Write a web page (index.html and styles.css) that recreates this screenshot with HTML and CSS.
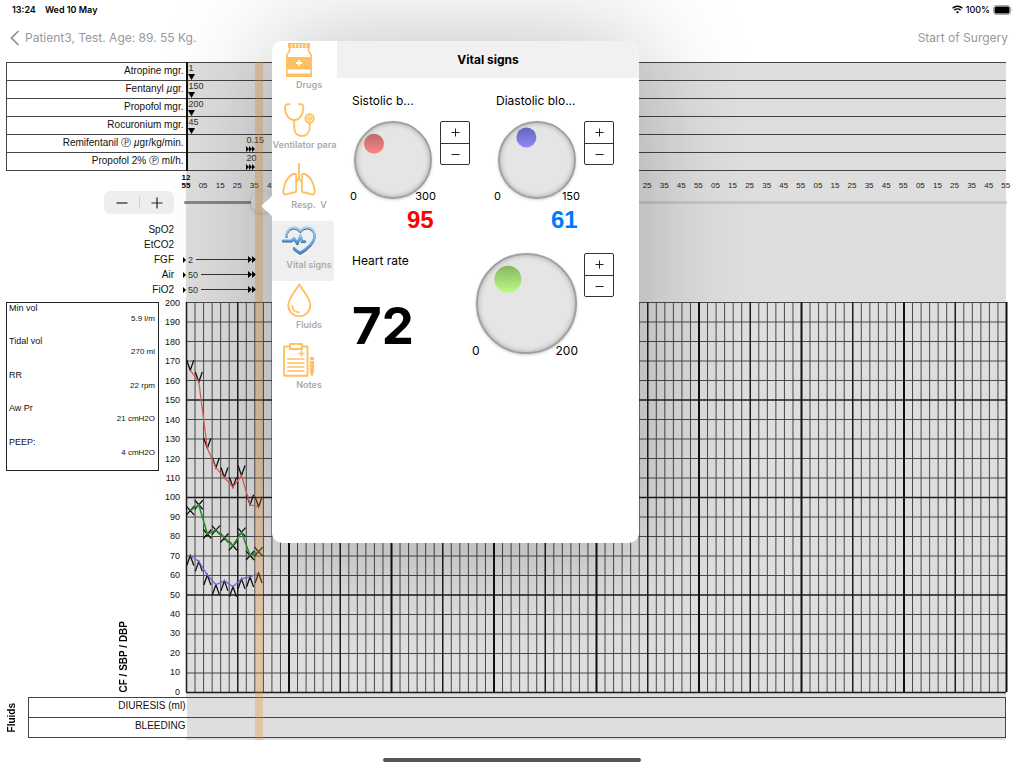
FILE: index.html
```html
<!DOCTYPE html>
<html lang="en">
<head>
<meta charset="utf-8">
<meta name="viewport" content="width=device-width, initial-scale=1">
<title>Anaesthesia record</title>
<link rel="stylesheet" href="styles.css">
</head>
<body>
<header class="status">
  <span>13:24</span>
  <span>Wed 10 May</span>
  <span class="status-right">
    <svg width="11" height="9" viewBox="0 0 11 9" fill="none" stroke="#000" stroke-width="1.5" aria-hidden="true"><path d="M.6 3.2a7 7 0 0 1 9.8 0M2.4 5.2a4.4 4.4 0 0 1 6.2 0"/><path d="M5.5 8.6L3.9 7a2.3 2.3 0 0 1 3.2 0z" fill="#000" stroke="none"/></svg>
    <span>100%</span>
    <svg width="20" height="10" viewBox="0 0 20 10" aria-hidden="true"><rect x=".5" y=".5" width="17" height="9" rx="2.5" fill="#fff" stroke="#aaa"/><rect x="1.5" y="1.5" width="15" height="7" rx="1.5"/><path d="M18.5 3.5q1.2 1.5 0 3z" fill="#aaa"/></svg>
  </span>
</header>
<nav class="navbar">
  <a href="#patients" class="nav-link"><svg width="10" height="16" viewBox="0 0 10 16" fill="none" stroke="#8e8e93" stroke-width="1.7" aria-hidden="true"><path d="M8.5 1L1.5 8l7 7"/></svg>Patient3, Test. Age: 89. 55 Kg.</a>
  <a href="#start" class="nav-link">Start of Surgery</a>
</nav>

<main class="sheet">
  <table class="drugs">
    <tbody>
      <tr><th scope="row">Atropine mgr.</th><td><span class="dose">1</span><svg class="bolus" viewBox="0 0 7 6"><path d="M0 0h7L3.5 6z"/></svg></td></tr>
      <tr><th scope="row">Fentanyl <i>µ</i>gr.</th><td><span class="dose">150</span><svg class="bolus" viewBox="0 0 7 6"><path d="M0 0h7L3.5 6z"/></svg></td></tr>
      <tr><th scope="row">Propofol mgr.</th><td><span class="dose">200</span><svg class="bolus" viewBox="0 0 7 6"><path d="M0 0h7L3.5 6z"/></svg></td></tr>
      <tr><th scope="row">Rocuronium mgr.</th><td><span class="dose">45</span><svg class="bolus" viewBox="0 0 7 6"><path d="M0 0h7L3.5 6z"/></svg></td></tr>
      <tr><th scope="row">Remifentanil Ⓟ <i>µ</i>gr/kg/min.</th><td class="infusion"><span class="dose">0.15</span><svg class="rate" viewBox="0 0 9 6"><path d="M0 0l3 3-3 3zM3 0l3 3-3 3zM6 0l3 3-3 3z"/></svg></td></tr>
      <tr><th scope="row">Propofol 2% Ⓟ ml/h.</th><td class="infusion"><span class="dose">20</span><svg class="rate" viewBox="0 0 9 6"><path d="M0 0l3 3-3 3zM3 0l3 3-3 3zM6 0l3 3-3 3z"/></svg></td></tr>
    </tbody>
  </table>

  <ol class="times" id="times"></ol>

  <div class="scrub">
    <div class="zoom"><button type="button" aria-label="Zoom out"><svg width="12" height="12" viewBox="0 0 12 12"><path d="M.5 6h11" stroke="#222" stroke-width="1.2"/></svg></button><button type="button" aria-label="Zoom in"><svg width="12" height="12" viewBox="0 0 12 12"><path d="M.5 6h11M6 .5v11" stroke="#222" stroke-width="1.2"/></svg></button></div>
    <input type="range" class="timeline" min="0" max="1000" value="84" aria-label="Time">
  </div>

  <dl class="gases">
    <div><dt>SpO2</dt></div>
    <div><dt>EtCO2</dt></div>
    <div><dt>FGF</dt><dd><svg width="3" height="6"><path d="M0 0l3 3-3 3z"/></svg><span>2</span><i></i><svg width="8" height="7"><path d="M0 0l4 3.5-4 3.5zM4 0l4 3.5-4 3.5z"/></svg></dd></div>
    <div><dt>Air</dt><dd><svg width="3" height="6"><path d="M0 0l3 3-3 3z"/></svg><span>50</span><i></i><svg width="8" height="7"><path d="M0 0l4 3.5-4 3.5zM4 0l4 3.5-4 3.5z"/></svg></dd></div>
    <div><dt>FiO2</dt><dd><svg width="3" height="6"><path d="M0 0l3 3-3 3z"/></svg><span>50</span><i></i><svg width="8" height="7"><path d="M0 0l4 3.5-4 3.5zM4 0l4 3.5-4 3.5z"/></svg></dd></div>
  </dl>

  <section class="chart">
    <div class="chart-side">
      <dl class="vent">
        <div><dt>Min vol</dt><dd>5.9 l/m</dd></div>
        <div><dt>Tidal vol</dt><dd>270 ml</dd></div>
        <div><dt>RR</dt><dd>22 rpm</dd></div>
        <div><dt>Aw Pr</dt><dd>21 cmH2O</dd></div>
        <div><dt>PEEP:</dt><dd>4 cmH2O</dd></div>
      </dl>
      <h2 class="upright axis-title">CF / SBP / DBP</h2>
    </div>
    <ol class="scale-y" id="scaleY"></ol>
    <svg class="plot" id="plot" viewBox="0 0 820 390" preserveAspectRatio="none" role="img" aria-label="Heart rate and blood pressure"></svg>
  </section>

  <section class="fluids">
    <h2 class="upright">Fluids</h2>
    <table>
      <tbody>
        <tr><th scope="row">DIURESIS (ml)</th><td></td></tr>
        <tr><th scope="row">BLEEDING</th><td></td></tr>
      </tbody>
    </table>
  </section>
  <div class="now"></div>
</main>
<footer class="home"></footer>

<aside class="popover" role="dialog" aria-label="Vital signs">
  <svg class="arrow" width="12" height="30" viewBox="0 0 12 30" aria-hidden="true"><path d="M12 0c0 4-1 5-4 8L1.500 13.500q-1.500 1.500 0 3L8 22c3 3 4 4 4 8z" fill="#fff"/></svg>
  <div class="panel">
    <div class="tabs">
      <button type="button" class="tab">
        <svg viewBox="0 0 34 34"><path d="M6 0h22v5H6z"/><path d="M10 1v3.500M13.500 1v3.500M17 1v3.500M20.500 1v3.500M24 1v3.500" stroke="#fff" stroke-width="1"/><path d="M7.500 5v3L4.800 12v21h24.400V12l-2.700-4V5" fill="#fff" stroke="#ffc062" stroke-width="1.600"/><path d="M4 14h26v12.500H4zM4 30.500h26V34H4z"/><path d="M17 17v6M14 20h6" stroke="#fff" stroke-width="1.800"/></svg>
        <span>Drugs</span></button>
      <button type="button" class="tab wide">
        <svg viewBox="0 0 34 34" class="line"><path d="M7.500 1.200C4 .7 3 2 3 4.500c0 7 4 12.500 9.200 12.500S21.400 11.500 21.400 4.500c0-2.500-1-3.800-4.500-3.300"/><path d="M12.200 17v7c0 6 3 9 7.500 9s8-3 8-9v-4"/><circle cx="27.600" cy="15.500" r="4.200"/><circle cx="27.600" cy="15.500" r="2.200" fill="#ffd798" stroke-width=".8"/></svg>
        <span>Ventilator para</span></button>
      <button type="button" class="tab">
        <svg viewBox="0 0 34 34" class="line"><path d="M17 1v14M14.200 19V13c0-2-1-2.700-2.700-2C6 13 1.500 20.500 1.200 28.500c0 2 1 3.200 3 2.900 2.500-.4 4.500-1.700 8-1.900 1.500-.1 2-1 2-2.300V19l2.800-3.500L19.800 19v8.200c0 1.300.5 2.200 2 2.300 3.500.2 5.500 1.500 8 1.900 2 .3 3-.9 3-2.900-.3-8-4.800-15.500-10.300-17.500-1.700-.7-2.700 0-2.700 2V19"/></svg>
        <span>Resp. &nbsp;V</span></button>
      <button type="button" class="tab selected" aria-pressed="true">
        <svg viewBox="0 0 34 34" class="line"><defs><linearGradient id="blue" x1="0" y1="0" x2="0" y2="1"><stop offset="0" stop-color="#a5d3f5"/><stop offset="1" stop-color="#3a92e4"/></linearGradient></defs><g class="heart"><path d="M4.500 13C4.500 7.500 8 4.300 12 4.300c2.500 0 4.500 1.200 6.300 3.500 1.800-2.300 3.800-3.500 6.500-3.500 5.300 0 8.500 4.400 7.700 9.700-1 6-7.500 11.500-14.200 15.700-2.300-1.200-4.500-2.700-6.300-4.700"/><path d="M1 17.500h8.500l2.500-2.500 3.500 5 3-8.500 1.500 6.500h3"/></g></svg>
        <span>Vital signs</span></button>
      <button type="button" class="tab">
        <svg viewBox="0 0 34 34" class="line"><path d="M17.300 1.500C13.500 8 6.300 15 6.300 22.300a11 11 0 0 0 22 0C28.300 15 21 8 17.300 1.500z"/><path d="M10.200 22.500c.2 4 2.800 6.600 6.600 6.900" stroke-width="1.600"/></svg>
        <span>Fluids</span></button>
      <button type="button" class="tab">
        <svg viewBox="0 0 34 34" class="line"><path d="M8 3.500H2v29.300h23.500V3.500H20"/><path d="M8 1h4.500q1.500-1 3 0H20v5H8z"/><path d="M5.500 16H22M5.500 20H22M5.500 24H22M5.500 28H22" stroke-width="1.300"/><path d="M19.500 8v5M17 10.500h5" stroke-width="1.600"/><path d="M28.500 14.500h3V30L30 33l-1.500-3z" fill="#ffc062" stroke-width="1"/><path d="M28 17.500h4" stroke="#fff" stroke-width=".8"/></svg>
        <span>Notes</span></button>
    </div>
    <div class="detail">
      <h1>Vital signs</h1>
      <div class="vitals">
        <section class="vital">
          <h3>Sistolic b...</h3>
          <div class="controls">
            <div class="dial">
              <label class="knob"><span class="dot red" style="--angle:-49.5deg"></span><input type="range" min="0" max="300" value="95" aria-label="Sistolic blood pressure"></label>
              <div class="ends"><span>0</span><span>300</span></div>
            </div>
            <div class="stepper"><button type="button" aria-label="Increase"><svg width="9" height="9" viewBox="0 0 9 9"><path d="M.5 4.500h8M4.500.5v8" stroke="#222"/></svg></button><button type="button" aria-label="Decrease"><svg width="9" height="9" viewBox="0 0 9 9"><path d="M.5 4.500h8" stroke="#222"/></svg></button></div>
          </div>
          <output class="sbp">95</output>
        </section>
        <section class="vital">
          <h3>Diastolic blo...</h3>
          <div class="controls">
            <div class="dial">
              <label class="knob"><span class="dot blue" style="--angle:-25.2deg"></span><input type="range" min="0" max="150" value="61" aria-label="Diastolic blood pressure"></label>
              <div class="ends"><span>0</span><span>150</span></div>
            </div>
            <div class="stepper"><button type="button" aria-label="Increase"><svg width="9" height="9" viewBox="0 0 9 9"><path d="M.5 4.500h8M4.500.5v8" stroke="#222"/></svg></button><button type="button" aria-label="Decrease"><svg width="9" height="9" viewBox="0 0 9 9"><path d="M.5 4.500h8" stroke="#222"/></svg></button></div>
          </div>
          <output class="dbp">61</output>
        </section>
        <section class="heart-rate">
          <div class="reading">
            <h3>Heart rate</h3>
            <output>72</output>
          </div>
          <div class="controls">
            <div class="dial large">
              <label class="knob"><span class="dot green" style="--angle:-37.8deg"></span><input type="range" min="0" max="200" value="72" aria-label="Heart rate"></label>
              <div class="ends"><span>0</span><span>200</span></div>
            </div>
            <div class="stepper"><button type="button" aria-label="Increase"><svg width="9" height="9" viewBox="0 0 9 9"><path d="M.5 4.500h8M4.500.5v8" stroke="#222"/></svg></button><button type="button" aria-label="Decrease"><svg width="9" height="9" viewBox="0 0 9 9"><path d="M.5 4.500h8" stroke="#222"/></svg></button></div>
          </div>
        </section>
      </div>
    </div>
  </div>
</aside>
<script src="chart.js"></script>
</body>
</html>
```

FILE: styles.css
```css
* { box-sizing: border-box; margin: 0; padding: 0; }
body { display: flex; flex-direction: column; min-height: 100vh; position: relative; background: #fff; color: #111; font-family: "Liberation Sans", Arial, sans-serif; font-size: 10px; overflow-x: hidden; }
button { font: inherit; border: 0; background: none; display: flex; align-items: center; justify-content: center; }
ol { list-style: none; }
svg { display: block; flex: none; }

.status { display: flex; align-items: center; gap: 9px; height: 19px; padding: 0 11px 0 12px; font: 600 9px/18px Inter, sans-serif; color: #000; }
.status-right { display: flex; align-items: center; gap: 3px; margin-left: auto; font-weight: 500; }
.navbar { display: flex; justify-content: space-between; align-items: center; height: 43px; padding: 0 16px 6px 10px; }
.nav-link { display: flex; align-items: center; gap: 5px; color: #98989c; text-decoration: none; font: 400 12px/16px Inter, sans-serif; }

.sheet { position: relative; padding-bottom: 2px; background: linear-gradient(#dedede, #dedede) no-repeat 186px 0 / calc(100% - 204px) 100%; }
table { border-collapse: collapse; }
.drugs { width: calc(100% - 24px); margin-left: 6px; table-layout: fixed; }
.drugs tr { height: 18px; }
.drugs th, .drugs td { border: 1px solid #444; }
.drugs td { border-right: 0; }
.drugs th { width: 180px; padding: 0 2px 2px 0; border-right: 2px solid #111; background: #fff; font-weight: 400; text-align: right; line-height: 14px; }
.drugs td { vertical-align: top; padding: 0; }
.drugs .infusion { padding-left: 58px; }
.dose { display: block; font-size: 9px; line-height: 11px; margin-left: 1px; color: #333; }
.bolus { width: 7px; height: 6px; margin-bottom: -1px; }
.rate { width: 9px; height: 6px; margin-bottom: -1px; }

.times { display: flex; justify-content: space-between; align-items: flex-end; height: 19px; margin: 0 18px 0 186px; font-size: 8px; line-height: 8px; color: #222; }
.times li { display: flex; justify-content: center; width: 0; text-align: center; }
.times li:first-child { font-weight: 700; color: #000; }

.scrub { display: flex; align-items: center; gap: 10px; height: 25px; padding: 0 17px 0 104px; }
.zoom { display: flex; flex: none; width: 70px; height: 23px; border-radius: 6px; background: #eee; }
.zoom button { flex: 1; }
.zoom button + button { background: linear-gradient(#d0d0d0, #d0d0d0) no-repeat 0 50% / 1px 13px; }
.timeline { flex: 1; min-width: 0; height: 22px; appearance: none; background: none; }
.timeline::-webkit-slider-runnable-track { height: 3px; border-radius: 2px; background: linear-gradient(90deg, #868686 9%, #c6c6c6 9%); }
.timeline::-webkit-slider-thumb { appearance: none; width: 22px; height: 22px; margin-top: -10px; border-radius: 50%; background: #dcdcda; box-shadow: 0 1px 4px rgba(0,0,0,.18); }

.gases { padding: 7px 0 5px; }
.gases div { display: flex; align-items: center; height: 15px; }
.gases dt { width: 174px; text-align: right; }
.gases dd { display: flex; align-items: center; gap: 2px; width: calc((100% - 204px) * .084 + 4px); margin-left: 9px; font-size: 9px; color: #333; }
.gases i { flex: 1; height: 1px; background: #333; margin: 0 -2px 0 1px; }

.chart { display: flex; padding-right: 18px; }
.chart-side { display: flex; width: 160px; padding-left: 6px; background: #fff; position: relative; flex: none; }
.vent { display: flex; flex-direction: column; width: 153px; height: 169px; border: 1px solid #222; padding: 0 3px 0 2px; }
.vent div { flex: 1; }
.vent dt { font-size: 9px; line-height: 10px; }
.vent dd { font-size: 8px; line-height: 11px; text-align: right; }
.upright { writing-mode: vertical-rl; transform: rotate(180deg); font-size: 10px; line-height: 12px; font-weight: 700; color: #000; }
.axis-title { position: absolute; left: 118px; bottom: 0; font-size: 10px; }
.scale-y { display: flex; flex-direction: column; justify-content: space-between; flex: none; width: 26px; padding: 1px 6px 0 0; font-size: 9px; text-align: right; }
.scale-y li { display: flex; align-items: center; justify-content: flex-end; height: 0; }
.plot { flex: 1; min-width: 0; height: 390px; overflow: visible; }
.plot .thin { stroke: #484848; stroke-width: 1; }
.plot .mid { stroke: #1c1c1c; stroke-width: 1.500; }
.plot .bold { stroke: #111; stroke-width: 2; }
.plot path { fill: none; }
.plot .sbp-line { stroke: #e0605c; stroke-width: 1.300; }
.plot .hr-line { stroke: #2c9030; stroke-width: 1.600; }
.plot .dbp-line { stroke: #6c68e0; stroke-width: 1.300; }
.plot .marks { stroke: #111; stroke-width: 1.300; }

.fluids { display: flex; align-items: center; padding: 5px 18px 0 6px; }
.fluids h2 { width: 12px; margin-right: 10px; flex: none; }
.fluids table { flex: 1; table-layout: fixed; width: 100%; }
.fluids tr { height: 20px; }
.fluids th { width: 158px; padding-right: 1px; font-weight: 400; text-align: right; vertical-align: top; line-height: 15px; background: #fff; }
.fluids th, .fluids td { border: solid #444; border-width: 1px 0; }
.fluids th { border-left-width: 1px; }
.fluids td { border-right-width: 1px; }
.now { position: absolute; top: 0; bottom: 0; left: calc(186px + (100% - 204px) * .084); width: 8px; background: rgba(230,140,40,.3); pointer-events: none; }
.home { width: 258px; height: 4px; margin: 18px auto 0; border-radius: 2px; background: #555; }

.popover { position: absolute; left: 272px; top: 41px; width: 367px; border-radius: 10px; box-shadow: 0 0 110px rgba(0,0,0,.26); font-family: Inter, sans-serif; color: #000; }
.arrow { position: absolute; left: -11px; top: 150px; }
.panel { display: flex; min-height: 502px; border-radius: 10px; background: #fff; overflow: hidden; position: relative; }
.tabs { width: 65px; flex: none; }
.tab { flex-direction: column; align-items: flex-start; justify-content: flex-start; gap: 1px; width: 62px; height: 60px; padding: 2px 0 0 10px; color: #ababab; font-size: 9px; font-weight: 600; line-height: 14px; }
.tab svg { width: 34px; height: 34px; fill: #ffc062; }
.tab svg.line { fill: none; stroke: #ffc062; stroke-width: 1.900; stroke-linejoin: round; stroke-linecap: round; }
.tab span { display: block; width: 54px; text-align: center; white-space: nowrap; }
.tab.wide { padding-left: 0; width: 65px; }
.tab.wide svg { margin-left: 10px; }
.tab.wide span { width: 65px; }
.tab.selected { background: #efeff0; border-radius: 0 3px 3px 0; }
.tab .heart { stroke: url(#blue); stroke-width: 2.200; filter: drop-shadow(0 1px 0.5px rgba(30,50,75,.75)); }
.detail { flex: 1; min-width: 0; }
.detail h1 { height: 37px; background: #f1f1f1; font-size: 12px; line-height: 37px; font-weight: 700; text-align: center; }
.detail h3 { font-size: 12px; line-height: 16px; font-weight: 400; }
.vitals { display: grid; grid-template-columns: 1fr 1fr; gap: 19px 26px; padding: 15px 25px 0 15px; }
.vital h3 { margin-bottom: 12px; white-space: nowrap; }
.controls { display: flex; justify-content: space-between; align-items: flex-start; }
.dial { width: 86px; margin-left: -2px; }
.knob { display: block; position: relative; width: 78px; height: 78px; margin-left: 4px; border-radius: 50%; border: 2px solid #a0a0a0; background: #e5e5e5; box-shadow: inset 0 0 5px rgba(0,0,0,.28), 0 1px 3px rgba(0,0,0,.2); }
.knob input { position: absolute; inset: 0; width: 100%; height: 100%; opacity: 0; }
.dot { position: absolute; left: 50%; top: 50%; width: 20px; height: 20px; margin: -10px; border-radius: 50%; transform: rotate(var(--angle)) translateY(-25px) rotate(calc(var(--angle) * -1)); }
.red { background: linear-gradient(#bd6868, #fb8888); }
.blue { background: linear-gradient(#6666b8, #8a88fa); }
.green { background: linear-gradient(#87b562, #bcfb83); }
.ends { display: flex; justify-content: space-between; margin-top: -10px; font-size: 11px; line-height: 14px; position: relative; }
.large { width: 106px; }
.large .knob { width: 101px; height: 101px; }
.large .ends { font-size: 12px; }
.large .dot { width: 27px; height: 27px; margin: -13px; transform: rotate(var(--angle)) translateY(-32px) rotate(calc(var(--angle) * -1)); }
.stepper { width: 30px; border: 1px solid #333; border-radius: 2px; }
.stepper button { width: 28px; height: 21px; }
.stepper button + button { border-top: 1px solid #333; }
.vital output { display: block; width: 83px; margin: 3px 0 0; padding-left: 55px; font: 700 24px/28px "Liberation Sans", Arial, sans-serif; }
.sbp { color: #f00; }
.dbp { color: #007aff; }
.heart-rate { grid-column: 1 / -1; display: flex; justify-content: space-between; }
.heart-rate .controls { gap: 6px; }
.heart-rate output { display: block; margin-top: 26px; font-size: 51px; line-height: 62px; font-weight: 700; }
```

FILE: chart.js
```js
const STEP = 820 / 96;
const plot = document.getElementById('plot');

function addPath(d, cls) {
  const p = document.createElementNS('http://www.w3.org/2000/svg', 'path');
  p.setAttribute('d', d);
  p.setAttribute('class', cls);
  plot.appendChild(p);
}

// Time labels every ten minutes, starting at 12:55.
const minutes = ['55', '05', '15', '25', '35', '45'];
const times = document.getElementById('times');
for (let i = 0; i <= 48; i++) {
  const li = document.createElement('li');
  li.innerHTML = i === 0 ? '12<br>55' : minutes[i % 6];
  times.appendChild(li);
}

const scaleY = document.getElementById('scaleY');
for (let v = 200; v >= 0; v -= 10) {
  const li = document.createElement('li');
  li.textContent = v;
  scaleY.appendChild(li);
}

const grid = { thin: '', mid: '', bold: '' };
for (let i = 0; i <= 96; i++) {
  const kind = i % 12 === 0 && i > 0 ? 'bold' : i % 6 === 0 ? 'mid' : 'thin';
  grid[kind] += `M${(i * STEP + 0.5).toFixed(2)} 0V390`;
}
for (let v = 0; v <= 200; v += 10) {
  const kind = v % 50 === 0 && v < 200 ? 'mid' : 'thin';
  grid[kind] += `M0 ${390 - v * 1.95 + 0.5}H820`;
}
for (const kind in grid) addPath(grid[kind], kind);

const sbp = [165, 159, 125, 115, 110, 105, 111, 96, 95];
const hr = [93, 96, 81, 83, 79, 75, 82, 70, 72];
const dbp = [70, 67, 60, 55, 57, 54, 58, 59, 61];
const x = i => (i + 0.5) * STEP;
const y = v => 390 - v * 1.95;
const line = s => 'M' + s.map((v, i) => `${x(i)} ${y(v)}`).join('L');

addPath(
  sbp.map((v, i) => `M${x(i) - 3.5} ${y(v) - 10}l3.5 10l3.5 -10`).join('') +
  hr.map((v, i) => `M${x(i) - 4} ${y(v) - 4.5}l8 9m0 -9l-8 9`).join('') +
  dbp.map((v, i) => `M${x(i) - 3.5} ${y(v) + 10}l3.5 -10l3.5 10`).join(''),
  'marks'
);
addPath(line(sbp), 'sbp-line');
addPath(line(hr), 'hr-line');
addPath(line(dbp), 'dbp-line');
```
